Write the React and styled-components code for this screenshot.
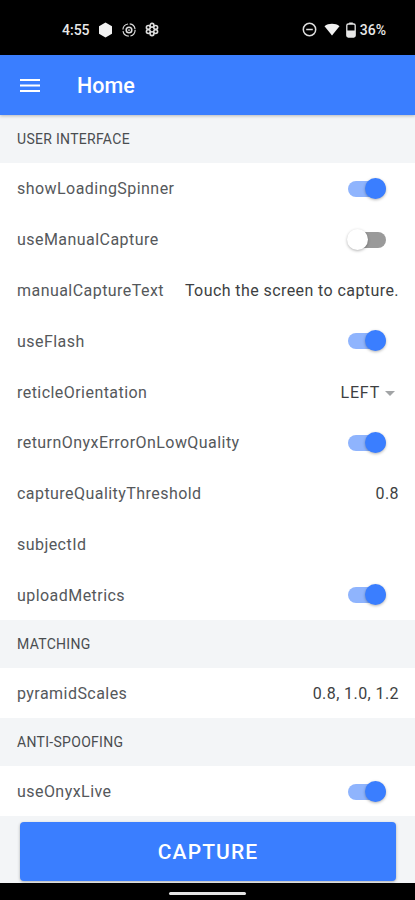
import styled, { createGlobalStyle } from "styled-components";

const GlobalStyle = createGlobalStyle`
  html, body {
    margin: 0;
    padding: 0;
    background: #000;
  }
  * {
    box-sizing: border-box;
  }
`;

const Screen = styled.div`
  width: 415px;
  height: 900px;
  display: flex;
  flex-direction: column;
  overflow: hidden;
  font-family: Roboto, "Liberation Sans", sans-serif;
  background: #f3f5f7;
`;

const StatusBar = styled.div`
  height: 55px;
  flex: none;
  background: #000;
  color: #e8e8e8;
  display: flex;
  align-items: center;
  justify-content: space-between;
  padding: 4px 29px 0 62px;
  font-size: 14px;
  font-weight: 500;
`;

const StatusGroup = styled.div`
  display: flex;
  align-items: center;
  gap: ${(p) => p.$gap || 6}px;
`;

const Clock = styled.span`
  margin-right: -1px;
`;

const Percent = styled.span`
  margin-left: -3px;
`;

const AppBar = styled.header`
  height: 60px;
  flex: none;
  background: #3a7eff;
  color: #fff;
  display: flex;
  align-items: center;
  gap: 37px;
  padding: 0 20px;
  box-shadow: 0 1px 3px rgba(0, 0, 0, 0.25);
  position: relative;
  z-index: 1;
`;

const Title = styled.h1`
  margin: 0;
  font-size: 21.5px;
  font-weight: 500;
`;

const SettingsList = styled.div`
  flex: 1;
  min-height: 0;
`;

const SectionHeader = styled.div`
  height: 48px;
  padding: 0 17px;
  display: flex;
  align-items: center;
  font-size: 14px;
  letter-spacing: 0.3px;
  color: #4a4d50;
  background: #f3f5f7;
`;

const Row = styled.div`
  height: ${(p) => p.$height || 50.8}px;
  padding: 1px 16px 0 17px;
  display: flex;
  align-items: center;
  justify-content: space-between;
  background: #fff;
  font-size: 16px;
  color: #55585b;
  letter-spacing: 0.45px;
`;

const Value = styled.span`
  color: #3d3f42;
  font-size: 16px;
  letter-spacing: 0.42px;
`;

const Select = styled.span`
  color: #3d3f42;
  font-size: 16px;
  letter-spacing: 0.8px;
  display: flex;
  align-items: center;
  gap: 5px;
`;

const Track = styled.div`
  width: 38px;
  height: 16px;
  border-radius: 8px;
  margin-right: 13px;
  background: ${(p) => (p.$on ? "#8fb4fd" : "#9a9a9a")};
  position: relative;
`;

const Thumb = styled.div`
  position: absolute;
  top: -3px;
  left: ${(p) => (p.$on ? "17px" : "-1px")};
  width: 21px;
  height: 21px;
  border-radius: 50%;
  background: ${(p) => (p.$on ? "#3a7eff" : "#fff")};
  box-shadow: 0 1px 3px rgba(0, 0, 0, 0.3);
`;

const Caret = styled.span`
  width: 0;
  height: 0;
  border-left: 5px solid transparent;
  border-right: 5px solid transparent;
  border-top: 5px solid #a2a4a6;
  margin: 2px 4px 0 0;
`;

const Footer = styled.div`
  height: 67px;
  flex: none;
  padding: 6px 19px 2px 20px;
  background: #f3f5f7;
`;

const CaptureButton = styled.button`
  width: 100%;
  height: 100%;
  border: 0;
  border-radius: 4px;
  background: #3a7eff;
  color: #fff;
  font-family: inherit;
  font-size: 21px;
  font-weight: 500;
  letter-spacing: 1.1px;
  box-shadow: 0 1px 3px rgba(0, 0, 0, 0.3);
`;

const NavBar = styled.div`
  height: 17px;
  flex: none;
  background: #000;
  display: flex;
  justify-content: center;
  padding-top: 9px;
`;

const HomeHandle = styled.div`
  width: 77px;
  height: 3px;
  border-radius: 2px;
  background: #e4e4e4;
`;

function Toggle({ on }) {
  return (
    <Track $on={on}>
      <Thumb $on={on} />
    </Track>
  );
}

function Setting({ label, on, value, height }) {
  return (
    <Row $height={height}>
      <span>{label}</span>
      {on !== undefined ? <Toggle on={on} /> : value && <Value>{value}</Value>}
    </Row>
  );
}

function App() {
  return (
    <>
      <GlobalStyle />
      <Screen>
        <StatusBar>
          <StatusGroup $gap={9}>
            <Clock>4:55</Clock>
            <svg width="15" height="16" viewBox="0 0 15 16">
              <path d="M7.5 0.5 14 4.2v7.6l-6.5 3.700L1 11.8V4.200z" fill="#f2f2f2" strokeLinejoin="round" />
            </svg>
            <svg width="14" height="14" viewBox="0 0 16 16" fill="none" stroke="#ddd">
              <circle cx="8" cy="8" r="7" strokeWidth="1.3" strokeDasharray="9 2" />
              <circle cx="8" cy="8" r="3.2" strokeWidth="1.8" />
              <circle cx="8" cy="8" r="1" fill="#ddd" stroke="none" />
            </svg>
            <svg width="14" height="15" viewBox="0 0 16 16" fill="none" stroke="#ddd" strokeWidth="1.8">
              <circle cx="8" cy="3.2" r="2.2" />
              <circle cx="12.2" cy="5.6" r="2.2" />
              <circle cx="12.2" cy="10.4" r="2.2" />
              <circle cx="8" cy="12.8" r="2.2" />
              <circle cx="3.8" cy="10.4" r="2.2" />
              <circle cx="3.8" cy="5.6" r="2.2" />
            </svg>
          </StatusGroup>
          <StatusGroup $gap={6.5}>
            <svg width="15" height="15" viewBox="0 0 15 15" fill="none" stroke="#ddd" strokeWidth="1.5">
              <circle cx="7.5" cy="7.5" r="6.2" />
              <path d="M4.200 7.500h6.600" />
            </svg>
            <svg width="16" height="13" viewBox="0 0 16 13">
              <path d="M0.5 3.2C4.5 0 11.500 0 15.500 3.200L8 12.500z" fill="#f2f2f2" />
            </svg>
            <svg width="10" height="16" viewBox="0 0 10 16" fill="none">
              <rect x="0.8" y="2" width="8.4" height="13" rx="1.5" stroke="#e8e8e8" strokeWidth="1.3" />
              <rect x="3.2" y="0.5" width="3.6" height="1.500" fill="#e8e8e8" />
              <rect x="1" y="8.5" width="8" height="6.5" fill="#e8e8e8" />
            </svg>
            <Percent>36%</Percent>
          </StatusGroup>
        </StatusBar>
        <AppBar>
          <svg width="20" height="13" viewBox="0 0 20 13" stroke="#fff" strokeWidth="2">
            <path d="M0 1h20M0 6.500h20M0 12h20" />
          </svg>
          <Title>Home</Title>
        </AppBar>
        <SettingsList>
          <SectionHeader>USER INTERFACE</SectionHeader>
          <Setting label="showLoadingSpinner" on />
          <Setting label="useManualCapture" on={false} />
          <Setting label="manualCaptureText" value="Touch the screen to capture." />
          <Setting label="useFlash" on />
          <Row>
            <span>reticleOrientation</span>
            <Select>
              LEFT
              <Caret />
            </Select>
          </Row>
          <Setting label="returnOnyxErrorOnLowQuality" on />
          <Setting label="captureQualityThreshold" value="0.8" />
          <Setting label="subjectId" />
          <Setting label="uploadMetrics" on />
          <SectionHeader>MATCHING</SectionHeader>
          <Setting label="pyramidScales" value="0.8, 1.0, 1.2" height={50} />
          <SectionHeader>ANTI-SPOOFING</SectionHeader>
          <Setting label="useOnyxLive" on height={50} />
        </SettingsList>
        <Footer>
          <CaptureButton>CAPTURE</CaptureButton>
        </Footer>
        <NavBar>
          <HomeHandle />
        </NavBar>
      </Screen>
    </>
  );
}

export default App;
